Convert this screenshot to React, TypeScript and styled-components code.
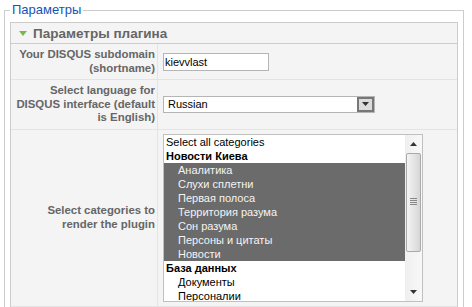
import React from "react";
import styled, { createGlobalStyle } from "styled-components";

const Global = createGlobalStyle`
  html, body { margin: 0; padding: 0; background: #fff; }
  body { font-family: "Liberation Sans", Arial, sans-serif; }
`;

const Fieldset = styled.fieldset`
  margin: 3px 0 0 4px;
  padding: 5px 5px 0 5px;
  width: 448px;
  border: 1px solid #cccccc;
  border-bottom: none;
`;

const Legend = styled.legend`
  padding: 0 2px;
  font-size: 13px;
  line-height: 14px;
  color: #1554b6;
`;

const Panel = styled.div`
  border: 1px solid #cccccc;
  border-bottom: none;
  background: #f4f4f4;
`;

const PanelHeader = styled.div`
  height: 20px;
  display: flex;
  align-items: center;
  gap: 6px;
  padding-left: 8px;
  border-bottom: 1px solid #cccccc;
  font-size: 13.5px;
  font-weight: bold;
  color: #666;
`;

const Table = styled.table`
  border-collapse: collapse;
  width: 100%;
`;

const KeyCell = styled.td`
  width: 144px;
  padding: 4px 2px 4px 0;
  text-align: right;
  vertical-align: middle;
  font-size: 11.4px;
  line-height: 13.5px;
  font-weight: bold;
  color: #666;
  white-space: nowrap;
  border-right: 1px solid #e4e4e4;
  border-bottom: 1px solid #e4e4e4;
`;

const ValueCell = styled.td`
  padding: 4px 5px;
  vertical-align: middle;
  border-bottom: 1px solid #e4e4e4;
`;

const TextInput = styled.div`
  width: 103px;
  height: 16px;
  border: 1px solid #b5b5b5;
  background: #fff;
  font-size: 11px;
  line-height: 16px;
  color: #000;
  padding-left: 1px;
  box-sizing: content-box;
`;

const SelectBox = styled.div`
  width: 210px;
  height: 15px;
  border: 1px solid #b5b5b5;
  background: #fff;
  display: flex;
  align-items: center;
  justify-content: space-between;
  font-size: 11px;
  color: #000;
`;

const SelectText = styled.span`
  padding-left: 4px;
`;

const SelectButton = styled.div`
  width: 13px;
  height: 11px;
  border: 2px solid #777;
  background: #dcdcdc;
  display: flex;
  align-items: center;
  justify-content: center;
`;

const ListBox = styled.div`
  width: 258px;
  height: 166px;
  border: 1px solid #c0c0c0;
  background: #fff;
  display: flex;
  overflow: hidden;
`;

const Options = styled.div`
  flex: 1;
`;

const Option = styled.div<{ $level: number; $selected?: boolean; $bold?: boolean }>`
  height: 14px;
  line-height: 14px;
  font-size: 11px;
  padding-left: ${(p) => (p.$level ? 14 : 2)}px;
  font-weight: ${(p) => (p.$bold ? "bold" : "normal")};
  background: ${(p) => (p.$selected ? "#6b6b6b" : "transparent")};
  color: ${(p) => (p.$selected ? "#f4f4f4" : "#000")};
  white-space: nowrap;
`;

const ScrollBar = styled.div`
  width: 17px;
  background: linear-gradient(to right, #efefef, #f8f8f8);
  display: flex;
  flex-direction: column;
  align-items: center;
`;

const ScrollArrow = styled.div`
  height: 18px;
  width: 17px;
  display: flex;
  align-items: center;
  justify-content: center;
`;

const ScrollSpacer = styled.div`
  flex: 1;
`;

const Thumb = styled.div`
  width: 13px;
  height: 97px;
  border: 1px solid #a9a9a9;
  border-radius: 2px;
  background: linear-gradient(to right, #f4f4f4, #e2e2e2 60%, #d6d6d6);
  display: flex;
  align-items: center;
  justify-content: center;
`;

const Arrow = ({ down }: { down?: boolean }) => (
  <svg width="7" height="4" viewBox="0 0 7 4">
    <polygon points={down ? "0,0 7,0 3.5,4" : "0,4 7,4 3.5,0"} fill="#333" />
  </svg>
);

const options: { label: string; level: number; selected?: boolean; bold?: boolean }[] = [
  { label: "Select all categories", level: 0 },
  { label: "Новости Киева", level: 0, bold: true },
  { label: "Аналитика", level: 1, selected: true },
  { label: "Слухи сплетни", level: 1, selected: true },
  { label: "Первая полоса", level: 1, selected: true },
  { label: "Территория разума", level: 1, selected: true },
  { label: "Сон разума", level: 1, selected: true },
  { label: "Персоны и цитаты", level: 1, selected: true },
  { label: "Новости", level: 1, selected: true },
  { label: "База данных", level: 0, bold: true },
  { label: "Документы", level: 1 },
  { label: "Персоналии", level: 1 },
];

export default function App() {
  return (
    <>
      <Global />
      <Fieldset>
        <Legend>Параметры</Legend>
        <Panel>
          <PanelHeader>
            <svg width="8" height="5" viewBox="0 0 8 5">
              <polygon points="0,0 8,0 4,5" fill="#78b94e" />
            </svg>
            Параметры плагина
          </PanelHeader>
          <Table>
            <tbody>
              <tr>
                <KeyCell>
                  Your DISQUS subdomain
                  <br />
                  (shortname)
                </KeyCell>
                <ValueCell>
                  <TextInput>kievvlast</TextInput>
                </ValueCell>
              </tr>
              <tr>
                <KeyCell>
                  Select language for
                  <br />
                  DISQUS interface (default
                  <br />
                  is English)
                </KeyCell>
                <ValueCell>
                  <SelectBox>
                    <SelectText>Russian</SelectText>
                    <SelectButton>
                      <Arrow down />
                    </SelectButton>
                  </SelectBox>
                </ValueCell>
              </tr>
              <tr>
                <KeyCell>
                  Select categories to
                  <br />
                  render the plugin
                </KeyCell>
                <ValueCell>
                  <ListBox>
                    <Options>
                      {options.map((o) => (
                        <Option key={o.label} $level={o.level} $selected={o.selected} $bold={o.bold}>
                          {o.label}
                        </Option>
                      ))}
                    </Options>
                    <ScrollBar>
                      <ScrollArrow>
                        <Arrow />
                      </ScrollArrow>
                      <Thumb>
                        <svg width="7" height="8" viewBox="0 0 7 8">
                          <rect x="0" y="0" width="7" height="1" fill="#888" />
                          <rect x="0" y="2" width="7" height="1" fill="#888" />
                          <rect x="0" y="4" width="7" height="1" fill="#888" />
                          <rect x="0" y="6" width="7" height="1" fill="#888" />
                        </svg>
                      </Thumb>
                      <ScrollSpacer />
                      <ScrollArrow>
                        <Arrow down />
                      </ScrollArrow>
                    </ScrollBar>
                  </ListBox>
                </ValueCell>
              </tr>
            </tbody>
          </Table>
        </Panel>
      </Fieldset>
    </>
  );
}
